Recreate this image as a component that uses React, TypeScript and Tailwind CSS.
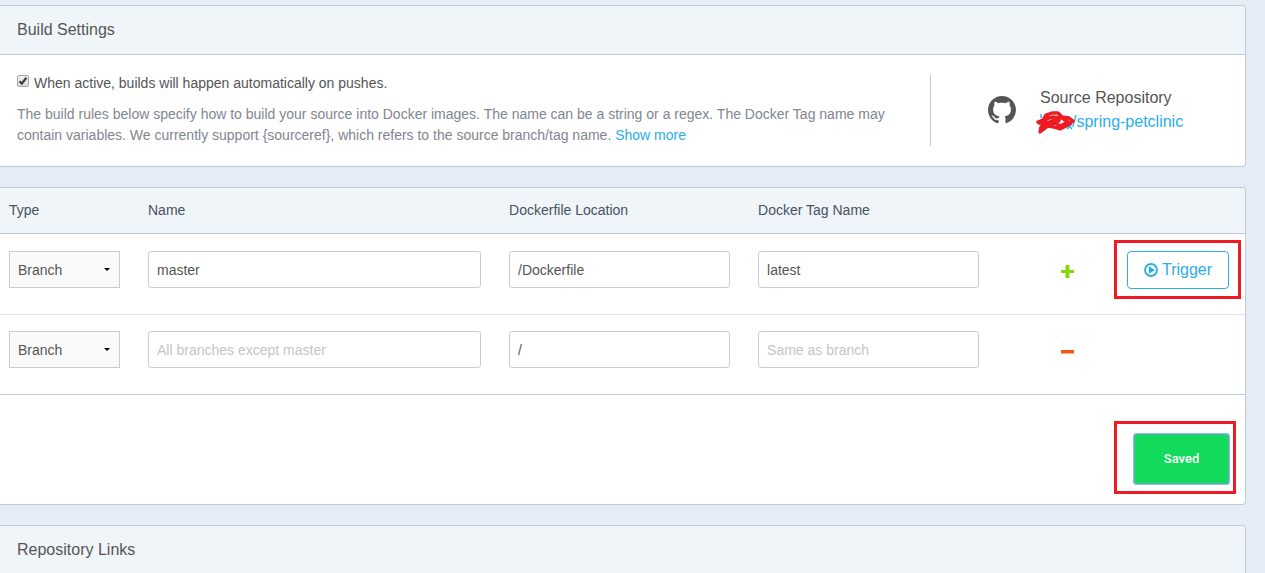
import React from "react";

type Rule = {
  id: string;
  name: string;
  location: string;
  tag: string;
  action: "add" | "remove";
};

const rules: Rule[] = [
  { id: "rule-1", name: "master", location: "/Dockerfile", tag: "latest", action: "add" },
  { id: "rule-2", name: "", location: "/", tag: "", action: "remove" },
];

const rulesHelp =
  "The build rules below specify how to build your source into Docker images. The name can be a string or a regex. " +
  "The Docker Tag name may contain variables. We currently support {sourceref}, which refers to the source " +
  "branch/tag name. ";

function GithubMark() {
  return (
    <svg viewBox="0 0 16 16" className="size-7 shrink-0 fill-[#555555]" aria-hidden="true">
      <path d="M8 0C3.58 0 0 3.58 0 8c0 3.54 2.29 6.53 5.47 7.59.4.07.55-.17.55-.38 0-.19-.01-.82-.01-1.49-2.01.37-2.53-.49-2.69-.94-.09-.23-.48-.94-.82-1.13-.28-.15-.68-.52-.01-.53.63-.01 1.08.58 1.23.82.72 1.21 1.87.87 2.33.66.07-.52.28-.87.51-1.07-1.78-.2-3.64-.89-3.64-3.95 0-.87.31-1.59.82-2.15-.08-.2-.36-1.02.08-2.12 0 0 .67-.21 2.2.82.64-.18 1.32-.27 2-.27s1.36.09 2 .27c1.53-1.04 2.2-.82 2.2-.82.44 1.1.16 1.92.08 2.12.51.56.82 1.27.82 2.15 0 3.07-1.87 3.75-3.65 3.95.29.25.54.73.54 1.48 0 1.07-.01 1.93-.01 2.2 0 .21.15.46.55.38A8.01 8.01 0 0 0 16 8c0-4.42-3.58-8-8-8z" />
    </svg>
  );
}

function Scribble() {
  return (
    <svg viewBox="0 0 40 26" className="absolute -left-1 -top-px h-[26px] w-10" fill="none" aria-hidden="true">
      <path d="M5 5v4M31 15l5 5M36 15l-5 5" stroke="#2aade8" strokeWidth="1.4" />
      <path
        d="M2 13 L7 11 L10 6 L16 4 L22 4 L26 8 L33 9 L37 12 L30 17 L24 20 L18 18 L12 17 L4 23 L5 18 L11 14 L3 14 M8 11 L16 8 L26 9 L32 13 M11 14 L18 11 L23 12 M14 16 L19 14 L24 17 L30 14 M12 8 L8 14"
        stroke="#ed1c24"
        strokeWidth="3.4"
        strokeLinecap="round"
        strokeLinejoin="round"
      />
    </svg>
  );
}

function PlayCircle() {
  return (
    <svg viewBox="0 0 14 14" className="size-[14px]" aria-hidden="true">
      <circle cx="7" cy="7" r="6" fill="none" stroke="currentColor" strokeWidth="1.8" />
      <path d="M4.8 3.2v7.6L11 7z" fill="currentColor" />
    </svg>
  );
}

function Panel({ title, children }: { title?: string; children?: React.ReactNode }) {
  return (
    <section className="rounded-r border border-l-0 border-[#c0c9d8] bg-white">
      {title && (
        <h2 className="rounded-tr border-b border-[#c0c9d8] bg-[#f0f5fa] px-[17px] text-base leading-[48px] text-[#555555]">
          {title}
        </h2>
      )}
      {children}
    </section>
  );
}

function Highlight({ className }: { className: string }) {
  return <span className={"pointer-events-none absolute border-3 border-[#ed1c24] " + className} />;
}

function TextField({ label, value, placeholder }: { label: string; value: string; placeholder?: string }) {
  return (
    <input
      type="text"
      aria-label={label}
      defaultValue={value}
      placeholder={placeholder}
      className="block h-[37px] w-full rounded-[3px] border border-[#cccccc] bg-white px-2 text-sm text-[#555555] outline-none placeholder:text-[#c5c5c5]"
    />
  );
}

function TypeSelect() {
  return (
    <div className="relative">
      <select
        aria-label="Type"
        defaultValue="Branch"
        className="block h-[37px] w-full appearance-none border border-[#cccccc] bg-[#fafafa] px-2 text-sm text-[#555555] outline-none"
      >
        <option>Branch</option>
        <option>Tag</option>
      </select>
      <svg viewBox="0 0 6 3" className="pointer-events-none absolute right-[10px] top-[17px] h-[3px] w-[6px]" aria-hidden="true">
        <path d="M0 0h6L3 3z" fill="#000" />
      </svg>
    </div>
  );
}

export default function App() {
  return (
    <main className="flex min-h-screen flex-col gap-5 overflow-hidden bg-[#e5ecf5] pr-[19px] pt-[5px] font-['Liberation_Sans',Arial,sans-serif] text-sm text-[#555555]">
      <Panel title="Build Settings">
        <div className="flex py-5">
          <div className="flex-1 pl-[17px] pr-6">
            <label className="mb-[13px] flex items-start gap-[5px] leading-4">
              <span className="relative size-3 shrink-0">
                <input
                  type="checkbox"
                  defaultChecked
                  className="peer block size-3 appearance-none rounded-[2px] border border-[#a5a5a5] bg-linear-to-b from-[#f0f0f0] to-[#dcdcdc]"
                />
                <svg viewBox="0 0 12 12" className="pointer-events-none absolute inset-0 hidden size-3 peer-checked:block" aria-hidden="true">
                  <path d="M2.6 6.3 4.8 8.6 9.4 2.8" fill="none" stroke="#3c3c3c" strokeWidth="2.2" />
                </svg>
              </span>
              When active, builds will happen automatically on pushes.
            </label>
            <p className="leading-[21px] text-[#82868f]">
              {rulesHelp}
              <a href="#more" className="text-[#2aade8]">
                Show more
              </a>
            </p>
          </div>
          <div className="flex w-[315px] shrink-0 items-start gap-6 border-l border-[#c0c9d8] pl-[57px] pt-[11px] text-base leading-6">
            <span className="pt-[10px]">
              <GithubMark />
            </span>
            <div>
              <h3>Source Repository</h3>
              <a href="#repository" className="relative block pl-8 text-[#2aade8]">
                <Scribble />
                /spring-petclinic
              </a>
            </div>
          </div>
        </div>
      </Panel>

      <Panel>
        <table className="w-full table-fixed border-separate border-spacing-0 text-left">
          <colgroup>
            <col className="w-[139px]" />
            <col className="w-[29%]" />
            <col className="w-[20%]" />
            <col className="w-[20%]" />
            <col className="w-[120px]" />
            <col />
          </colgroup>
          <thead>
            <tr className="text-[#47535f] [&>th]:h-[46px] [&>th]:border-b [&>th]:border-[#c0c9d8] [&>th]:bg-[#f0f5fa] [&>th]:pb-0.5 [&>th]:pl-[9px] [&>th]:font-normal">
              <th>Type</th>
              <th>Name</th>
              <th>Dockerfile Location</th>
              <th>Docker Tag Name</th>
              <th aria-label="Edit" />
              <th aria-label="Run" className="rounded-tr" />
            </tr>
          </thead>
          <tbody className="[&_td]:border-b [&_td]:pb-[26px] [&_td]:pl-[9px] [&_td]:align-top">
            {rules.map((rule) => (
              <tr
                key={rule.id}
                className="last:[&>td]:border-[#c0c9d8] [&>td]:border-[#e1e3e6] [&>td]:pt-4 first:[&>td]:pt-[17px]"
              >
                <td className="pr-[19px]">
                  <TypeSelect />
                </td>
                <td className="pr-[19px]">
                  <TextField label="Name" value={rule.name} placeholder="All branches except master" />
                </td>
                <td className="pr-[19px]">
                  <TextField label="Dockerfile Location" value={rule.location} />
                </td>
                <td className="pr-[19px]">
                  <TextField label="Docker Tag Name" value={rule.tag} placeholder="Same as branch" />
                </td>
                <td>
                  <div className="flex h-[37px] items-center justify-center pl-[9px] pt-1">
                    {rule.action === "add" ? (
                      <button type="button" aria-label="Add rule" className="text-[#85d60a]">
                        <svg viewBox="0 0 13 13" className="size-[13px]" aria-hidden="true">
                          <path d="M4.5 0h4v5H13v3H8.5v5h-4V8H0V5h4.5z" fill="currentColor" />
                        </svg>
                      </button>
                    ) : (
                      <button type="button" aria-label="Remove rule" className="text-[#f0560f]">
                        <svg viewBox="0 0 13 13" className="size-[13px]" aria-hidden="true">
                          <path d="M0 5h13v3.5H0z" fill="currentColor" />
                        </svg>
                      </button>
                    )}
                  </div>
                </td>
                <td className="pr-4">
                  {rule.action === "add" && (
                    <div className="relative h-[37px]">
                      <button
                        type="button"
                        className="flex h-[38px] w-full items-center justify-center gap-1 rounded border border-[#2aade8] bg-white text-base text-[#2aade8]"
                      >
                        <PlayCircle />
                        Trigger
                      </button>
                      <Highlight className="-bottom-[11px] -left-[13px] -right-3 -top-[11px]" />
                    </div>
                  )}
                </td>
              </tr>
            ))}
          </tbody>
        </table>
        <div className="flex justify-end pb-[19px] pr-[15px] pt-[38px]">
          <div className="relative">
            <button
              type="button"
              className="block h-[52px] w-[97px] rounded border-2 border-[#4fb5a8] bg-[#13da5b] font-[Roboto,sans-serif] text-[13px] font-medium text-white outline-1 -outline-offset-1 outline-[#94b9f0]"
            >
              Saved
            </button>
            <Highlight className="-bottom-[9px] -left-[19px] -right-[6px] -top-3" />
          </div>
        </div>
      </Panel>

      <Panel title="Repository Links" />
    </main>
  );
}
